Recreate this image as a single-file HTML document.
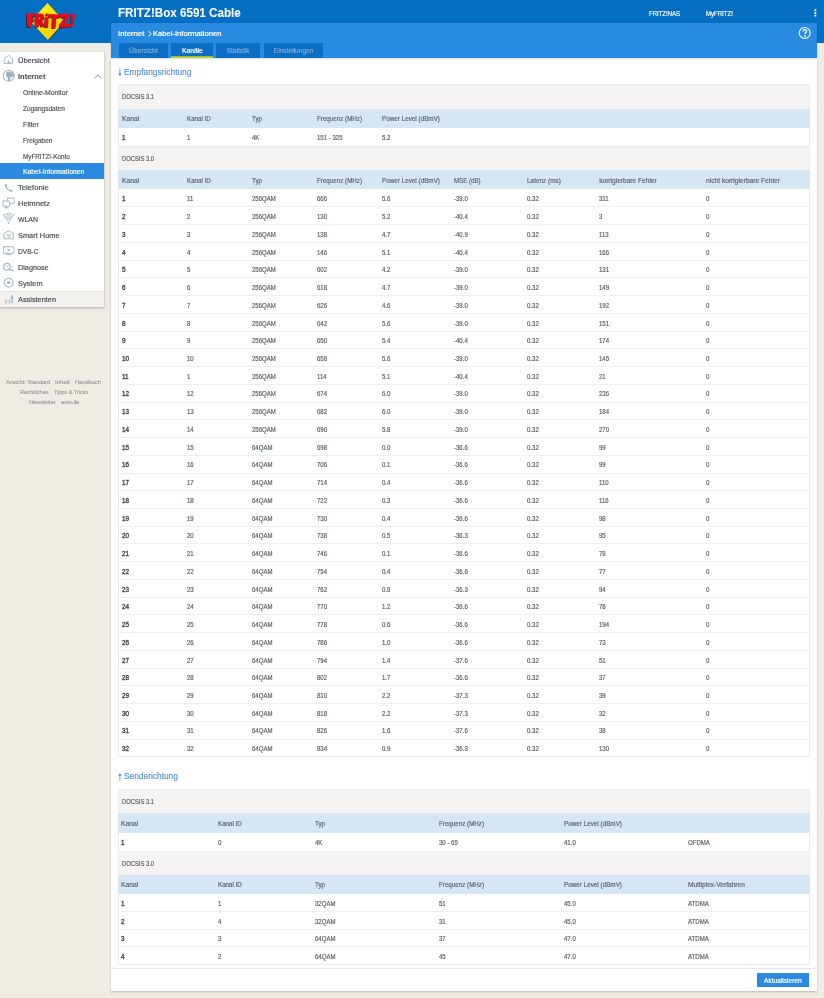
<!DOCTYPE html>
<html><head><meta charset="utf-8"><style>
*{margin:0;padding:0}
html,body{width:824px;height:998px;overflow:hidden;background:#efece6;font-family:"Liberation Sans",sans-serif}
#root{position:absolute;left:0;top:0;width:824px;height:998px;will-change:transform}
.a{position:absolute}
.t{position:absolute;line-height:20px;white-space:nowrap;transform-origin:0 50%;-webkit-text-stroke:0.18px currentColor}
.bd{-webkit-text-stroke:0.05px currentColor}
.sb{-webkit-text-stroke:0.4px currentColor}
</style></head><body><div id="root">
<div class="a" style="left:0.00px;top:0.00px;width:824.00px;height:43.00px;background:#046ec2;"></div>
<div class="a" style="left:111.00px;top:58.20px;width:706.00px;height:932.70px;background:#fff;box-shadow:0 1px 2px rgba(0,0,0,.22)"></div>
<div class="a" style="left:111.00px;top:22.70px;width:706.00px;height:35.50px;background:#288be1;box-shadow:0 1px 1.5px rgba(0,0,0,.15),0 -0.5px 1px rgba(0,40,90,.25)"></div>
<div class="a" style="left:118.80px;top:43.10px;width:49.00px;height:14.80px;background:#0b6dc3;"></div>
<div class="a" style="left:171.00px;top:43.10px;width:41.80px;height:14.80px;background:#0b6dc3;box-shadow:inset 0 -1.8px 0 #c3d21a"></div>
<div class="a" style="left:216.10px;top:43.10px;width:44.00px;height:14.80px;background:#0b6dc3;"></div>
<div class="a" style="left:263.80px;top:43.10px;width:59.70px;height:14.80px;background:#0b6dc3;"></div>
<div class="a" style="left:0.00px;top:52.00px;width:104.00px;height:255.20px;background:#fff;box-shadow:0 1px 2.5px rgba(0,0,0,.25)"></div>
<div class="a" style="left:0.00px;top:291.00px;width:104.00px;height:16.20px;background:#f3f2ef;border-top:0.8px solid #e4e2dd;box-sizing:border-box"></div>
<div class="a" style="left:0.00px;top:163.30px;width:104.00px;height:15.70px;background:#2a8ae0;"></div>
<div class="a" style="left:118.20px;top:84.20px;width:691.80px;height:673.10px;background:#fff;border:0.8px solid #edecea;box-sizing:border-box"></div>
<div class="a" style="left:118.20px;top:84.20px;width:691.80px;height:24.80px;background:#f5f4f2;border:0.8px solid #edecea;border-bottom:none;box-sizing:border-box"></div>
<div class="a" style="left:118.20px;top:109.00px;width:691.80px;height:19.00px;background:#d5e6f5;"></div>
<div class="a" style="left:118.20px;top:145.50px;width:691.80px;height:24.70px;background:#f5f4f2;border:0.8px solid #edecea;border-bottom:none;box-sizing:border-box"></div>
<div class="a" style="left:118.20px;top:170.20px;width:691.80px;height:19.30px;background:#d5e6f5;"></div>
<div class="a" style="left:119.00px;top:206.44px;width:690.20px;height:0.80px;background:#efefef;"></div>
<div class="a" style="left:119.00px;top:224.18px;width:690.20px;height:0.80px;background:#efefef;"></div>
<div class="a" style="left:119.00px;top:241.91px;width:690.20px;height:0.80px;background:#efefef;"></div>
<div class="a" style="left:119.00px;top:259.65px;width:690.20px;height:0.80px;background:#efefef;"></div>
<div class="a" style="left:119.00px;top:277.39px;width:690.20px;height:0.80px;background:#efefef;"></div>
<div class="a" style="left:119.00px;top:295.12px;width:690.20px;height:0.80px;background:#efefef;"></div>
<div class="a" style="left:119.00px;top:312.86px;width:690.20px;height:0.80px;background:#efefef;"></div>
<div class="a" style="left:119.00px;top:330.60px;width:690.20px;height:0.80px;background:#efefef;"></div>
<div class="a" style="left:119.00px;top:348.34px;width:690.20px;height:0.80px;background:#efefef;"></div>
<div class="a" style="left:119.00px;top:366.08px;width:690.20px;height:0.80px;background:#efefef;"></div>
<div class="a" style="left:119.00px;top:383.81px;width:690.20px;height:0.80px;background:#efefef;"></div>
<div class="a" style="left:119.00px;top:401.55px;width:690.20px;height:0.80px;background:#efefef;"></div>
<div class="a" style="left:119.00px;top:419.29px;width:690.20px;height:0.80px;background:#efefef;"></div>
<div class="a" style="left:119.00px;top:437.02px;width:690.20px;height:0.80px;background:#efefef;"></div>
<div class="a" style="left:119.00px;top:454.76px;width:690.20px;height:0.80px;background:#efefef;"></div>
<div class="a" style="left:119.00px;top:472.50px;width:690.20px;height:0.80px;background:#efefef;"></div>
<div class="a" style="left:119.00px;top:490.24px;width:690.20px;height:0.80px;background:#efefef;"></div>
<div class="a" style="left:119.00px;top:507.98px;width:690.20px;height:0.80px;background:#efefef;"></div>
<div class="a" style="left:119.00px;top:525.71px;width:690.20px;height:0.80px;background:#efefef;"></div>
<div class="a" style="left:119.00px;top:543.45px;width:690.20px;height:0.80px;background:#efefef;"></div>
<div class="a" style="left:119.00px;top:561.19px;width:690.20px;height:0.80px;background:#efefef;"></div>
<div class="a" style="left:119.00px;top:578.92px;width:690.20px;height:0.80px;background:#efefef;"></div>
<div class="a" style="left:119.00px;top:596.66px;width:690.20px;height:0.80px;background:#efefef;"></div>
<div class="a" style="left:119.00px;top:614.40px;width:690.20px;height:0.80px;background:#efefef;"></div>
<div class="a" style="left:119.00px;top:632.14px;width:690.20px;height:0.80px;background:#efefef;"></div>
<div class="a" style="left:119.00px;top:649.88px;width:690.20px;height:0.80px;background:#efefef;"></div>
<div class="a" style="left:119.00px;top:667.61px;width:690.20px;height:0.80px;background:#efefef;"></div>
<div class="a" style="left:119.00px;top:685.35px;width:690.20px;height:0.80px;background:#efefef;"></div>
<div class="a" style="left:119.00px;top:703.09px;width:690.20px;height:0.80px;background:#efefef;"></div>
<div class="a" style="left:119.00px;top:720.83px;width:690.20px;height:0.80px;background:#efefef;"></div>
<div class="a" style="left:119.00px;top:738.56px;width:690.20px;height:0.80px;background:#efefef;"></div>
<div class="a" style="left:118.20px;top:788.60px;width:691.80px;height:176.10px;background:#fff;border:0.8px solid #edecea;box-sizing:border-box"></div>
<div class="a" style="left:118.20px;top:788.60px;width:691.80px;height:24.80px;background:#f5f4f2;border:0.8px solid #edecea;border-bottom:none;box-sizing:border-box"></div>
<div class="a" style="left:118.20px;top:813.40px;width:691.80px;height:19.30px;background:#d5e6f5;"></div>
<div class="a" style="left:118.20px;top:850.50px;width:691.80px;height:24.40px;background:#f5f4f2;border:0.8px solid #edecea;border-bottom:none;box-sizing:border-box"></div>
<div class="a" style="left:118.20px;top:874.90px;width:691.80px;height:18.90px;background:#d5e6f5;"></div>
<div class="a" style="left:119.00px;top:910.80px;width:690.20px;height:0.80px;background:#efefef;"></div>
<div class="a" style="left:119.00px;top:928.60px;width:690.20px;height:0.80px;background:#efefef;"></div>
<div class="a" style="left:119.00px;top:946.40px;width:690.20px;height:0.80px;background:#efefef;"></div>
<div class="a" style="left:111.00px;top:968.00px;width:706.00px;height:0.80px;background:#e6e6e6;"></div>
<div class="a" style="left:757.10px;top:973.40px;width:51.60px;height:13.50px;background:#2a8ae0;"></div>
<svg class="a" style="left:0;top:52px" width="20" height="256" viewBox="0 52 20 256" fill="none" stroke="#a3b4c1" stroke-width="0.95" stroke-linejoin="round" stroke-linecap="round">
<path d="M4.6,58.6 L8.6,55.3 L12.6,58.6 L12.6,63.6 L4.6,63.6 Z"/>
<rect x="7.6" y="60.8" width="2" height="2.9" fill="#a3b4c1" stroke="none"/>
<circle cx="8.7" cy="75.8" r="5.5" stroke-width="1.05"/>
<path d="M6.4,72.3 C8.2,70.9 11.6,71.1 13.3,73.2 L14,75.9 C12.8,77 11.4,76.9 10.5,77.2 L9.9,80.9 L8.1,80.9 L7.6,77.3 C6.5,76.9 5.7,75.9 5.8,74.3 Z" fill="#a3b4c1" stroke="none"/>
<path d="M5.3,184.2 C4.6,184.8 4.6,186 5.6,187.6 C7,189.8 9.2,191.6 11.2,192 C12,192.1 12.6,191.6 12.8,191.1 L11.3,189.6 L9.8,190.1 C8.5,189.3 7.4,188 6.7,186.7 L7.3,185.2 L5.9,183.7 Z" fill="#a3b4c1" stroke="none"/>
<rect x="7.4" y="198.2" width="6.8" height="5.2" rx="0.4"/>
<rect x="3" y="201" width="6.8" height="5.2" rx="0.4" fill="#fff"/>
<path d="M6.4,206.3 L6.4,207.6 M4.6,207.8 L8.2,207.8"/>
<path d="M3.03,215.48 A9.3,9.3 0 0 1 13.97,215.48 M4.27,217.18 A7.2,7.2 0 0 1 12.73,217.18 M5.44,218.79 A5.2,5.2 0 0 1 11.56,218.79 M6.56,220.33 A3.3,3.3 0 0 1 10.44,220.33" stroke-width="1.0"/>
<circle cx="8.5" cy="222.7" r="1" fill="#a3b4c1" stroke="none"/>
<path d="M4.3,233.3 L8.8,230.8 L13.3,233.3 L13.3,238.8 L4.3,238.8 Z"/>
<path d="M8.8,237.3 L7.1,235.6 C6.6,235 7.2,234.1 8,234.4 L8.8,235 L9.6,234.4 C10.4,234.1 11,235 10.5,235.6 Z"/>
<rect x="3.6" y="246.8" width="10.4" height="6.6" rx="0.5"/>
<path d="M7.6,248.3 L10.4,250.1 L7.6,251.9 Z" fill="#a3b4c1" stroke="none"/>
<path d="M7,254.6 L10.6,254.6"/>
<circle cx="6.9" cy="266.7" r="3.3" stroke-width="1.15"/>
<path d="M9.4,269.2 L13.4,270.8" stroke-width="1.4"/>
<path d="M5.6,265.6 L7,267 L8.2,266.2" stroke-width="0.8"/>
<circle cx="12.6" cy="266.4" r="0.55" fill="#a3b4c1" stroke="none"/>
<circle cx="8.6" cy="282.6" r="4.4" stroke-width="1.15" stroke-dasharray="2.6 1.0"/>
<circle cx="8.6" cy="282.6" r="1.7" fill="#a3b4c1" stroke="none"/>
<path d="M4.3,299.7 L5.9,299.7 L7.6,301.5 L5.9,303.3 L4.3,303.3 L6,301.5 Z M7.9,299.7 L9.5,299.7 L11.2,301.5 L9.5,303.3 L7.9,303.3 L9.6,301.5 Z" fill="#a3b4c1" stroke="none"/>
<rect x="11.7" y="295.2" width="1.1" height="8.1" fill="#a3b4c1" stroke="none"/>
<path d="M12.8,295.2 L9.8,297.9 L12.8,299.2 Z" fill="#a3b4c1" stroke="none"/>
</svg>
<svg class="a" style="left:93px;top:72.5px" width="10" height="7"><polyline points="1.3,5.2 4.8,2 8.3,5.2" fill="none" stroke="#7f868c" stroke-width="0.9"/></svg>
<svg class="a" style="left:146.5px;top:30px" width="6" height="8"><polyline points="1.2,1.2 4.3,3.8 1.2,6.4" fill="none" stroke="#fff" stroke-width="0.9"/></svg>
<svg class="a" style="left:812.5px;top:8px" width="5" height="10"><rect x="1.4" y="1.3" width="1.9" height="1.8" fill="#fff"/><rect x="1.4" y="4" width="1.9" height="1.8" fill="#fff"/><rect x="1.4" y="6.7" width="1.9" height="1.8" fill="#fff"/></svg>
<svg class="a" style="left:797px;top:26px" width="16" height="14"><circle cx="7.7" cy="7" r="5.5" fill="none" stroke="#fff" stroke-width="1.1"/><path d="M6.1,5.4 C6.1,4.2 6.9,3.6 7.8,3.6 C8.8,3.6 9.5,4.3 9.5,5.2 C9.5,6.4 8,6.5 8,8.1" fill="none" stroke="#fff" stroke-width="1.35"/><circle cx="8" cy="9.9" r="0.85" fill="#fff"/></svg>
<svg class="a" style="left:117px;top:67px" width="6" height="10"><path d="M2.9,1.5 L2.9,8.5" stroke="#5296de" stroke-width="0.9"/><path d="M1.2,6.3 L2.9,9 L4.6,6.3 Z" fill="#5296de"/></svg>
<svg class="a" style="left:117px;top:771.5px" width="6" height="10"><path d="M2.9,1.5 L2.9,8.8" stroke="#5296de" stroke-width="0.9"/><path d="M1.2,4 L2.9,1.2 L4.6,4 Z" fill="#5296de"/></svg>
<svg class="a" style="left:20px;top:0" width="60" height="43" viewBox="0 0 60 43">
<defs><linearGradient id="lg" x1="0" y1="0" x2="1" y2="1"><stop offset="0" stop-color="#fff48a"/><stop offset="0.35" stop-color="#ffe600"/><stop offset="1" stop-color="#f0c800"/></linearGradient></defs>
<polygon points="27.5,3 44.5,21.4 28,40 10.5,21.4" fill="#203060" opacity="0.55" transform="translate(0.9,0.9)"/>
<polygon points="27.5,3 44.5,21.4 28,40 10.5,21.4" fill="url(#lg)"/>
<g transform="translate(-0.7,0.8)" fill="#3a0a10" opacity="0.8">
<path d="M6.5,13.6 L14.4,13.2 L14.6,16.6 L10.8,16.8 L10.9,18.8 L14,18.7 L14.2,21.9 L11.1,22 L11.3,26.9 L7.2,27.1 Z"/>
<path d="M15,13.6 L20.5,13.5 C23.4,13.5 24.6,15.3 24.4,17.6 C24.3,19.3 23.4,20.3 22.3,20.8 L25.2,26.3 L21,26.8 L18.8,21.6 L19,26.9 L15.2,27 Z M18.8,16.4 L18.9,19 C20.1,19 20.6,18.5 20.6,17.6 C20.6,16.8 20.1,16.3 18.8,16.4 Z"/>
<path d="M25.1,17 L28.6,17.2 L28.1,27.4 L24.6,27.2 Z M25.6,13.8 L28.4,13.6 L28.6,15.6 L25.8,15.8 Z"/>
<path d="M28.9,13.9 L39.4,14.6 L39.1,18.1 L36.2,17.9 L35.6,28.3 L31.8,28.1 L32.4,17.7 L28.6,17.4 Z"/>
<path d="M39.6,14 L49.6,13.2 L49.9,16.4 L44.4,23.4 L50.3,23 L50.6,26.8 L39.8,27.6 L39.5,24.5 L45.2,17.3 L39.9,17.7 Z"/>
<path d="M51.5,13.8 L55.2,14.3 L53.6,22.6 L50.8,22.2 Z M50.2,23.6 L53.1,24 L52.7,26.8 L49.8,26.4 Z"/>
</g>
<g fill="#e30d20">
<path d="M6.5,13.6 L14.4,13.2 L14.6,16.6 L10.8,16.8 L10.9,18.8 L14,18.7 L14.2,21.9 L11.1,22 L11.3,26.9 L7.2,27.1 Z"/>
<path d="M15,13.6 L20.5,13.5 C23.4,13.5 24.6,15.3 24.4,17.6 C24.3,19.3 23.4,20.3 22.3,20.8 L25.2,26.3 L21,26.8 L18.8,21.6 L19,26.9 L15.2,27 Z M18.8,16.4 L18.9,19 C20.1,19 20.6,18.5 20.6,17.6 C20.6,16.8 20.1,16.3 18.8,16.4 Z"/>
<path d="M25.1,17 L28.6,17.2 L28.1,27.4 L24.6,27.2 Z M25.6,13.8 L28.4,13.6 L28.6,15.6 L25.8,15.8 Z"/>
<path d="M28.9,13.9 L39.4,14.6 L39.1,18.1 L36.2,17.9 L35.6,28.3 L31.8,28.1 L32.4,17.7 L28.6,17.4 Z"/>
<path d="M39.6,14 L49.6,13.2 L49.9,16.4 L44.4,23.4 L50.3,23 L50.6,26.8 L39.8,27.6 L39.5,24.5 L45.2,17.3 L39.9,17.7 Z"/>
<path d="M51.5,13.8 L55.2,14.3 L53.6,22.6 L50.8,22.2 Z M50.2,23.6 L53.1,24 L52.7,26.8 L49.8,26.4 Z"/>
</g></svg>
<div class="t bd" style="left:117.92px;top:3.30px;font-size:13px;font-weight:700;color:#fff;transform:scaleX(0.8938);">FRITZ!Box 6591 Cable</div>
<div class="t" style="left:649.09px;top:3.60px;font-size:6.8px;font-weight:400;color:#fff;transform:scaleX(0.8832);">FRITZ!NAS</div>
<div class="t" style="left:706.29px;top:3.60px;font-size:6.8px;font-weight:400;color:#fff;transform:scaleX(0.8881);">MyFRITZ!</div>
<div class="t" style="left:118.26px;top:23.80px;font-size:7.4px;font-weight:400;color:#fff;transform:scaleX(1.0507);-webkit-text-stroke:0.22px #fff;">Internet</div>
<div class="t" style="left:152.56px;top:23.80px;font-size:7.4px;font-weight:400;color:#fff;transform:scaleX(1.0278);-webkit-text-stroke:0.22px #fff;">Kabel-Informationen</div>
<div class="t" style="left:128.90px;top:40.50px;font-size:6.6px;font-weight:400;color:#80abdb;transform:scaleX(1.0345);">Übersicht</div>
<div class="t" style="left:181.50px;top:40.50px;font-size:6.6px;font-weight:400;color:#fff;transform:scaleX(1.0124);">Kanäle</div>
<div class="t" style="left:226.55px;top:40.50px;font-size:6.6px;font-weight:400;color:#80abdb;">Statistik</div>
<div class="t" style="left:273.85px;top:40.50px;font-size:6.6px;font-weight:400;color:#80abdb;">Einstellungen</div>
<div class="t" style="left:17.76px;top:51.30px;font-size:7.3px;font-weight:400;color:#464d54;transform:scaleX(1.0316);">Übersicht</div>
<div class="t bd" style="left:17.76px;top:66.80px;font-size:7.3px;font-weight:700;color:#464d54;transform:scaleX(1.0274);">Internet</div>
<div class="t" style="left:17.76px;top:178.10px;font-size:7.3px;font-weight:400;color:#464d54;transform:scaleX(1.0514);">Telefonie</div>
<div class="t" style="left:17.76px;top:194.00px;font-size:7.3px;font-weight:400;color:#464d54;transform:scaleX(1.0383);">Heimnetz</div>
<div class="t" style="left:17.76px;top:209.80px;font-size:7.3px;font-weight:400;color:#464d54;transform:scaleX(0.9447);">WLAN</div>
<div class="t" style="left:17.76px;top:225.80px;font-size:7.3px;font-weight:400;color:#464d54;transform:scaleX(1.0155);">Smart Home</div>
<div class="t" style="left:17.76px;top:241.70px;font-size:7.3px;font-weight:400;color:#464d54;transform:scaleX(0.9071);">DVB-C</div>
<div class="t" style="left:17.76px;top:257.80px;font-size:7.3px;font-weight:400;color:#464d54;transform:scaleX(0.9944);">Diagnose</div>
<div class="t" style="left:17.76px;top:273.70px;font-size:7.3px;font-weight:400;color:#464d54;transform:scaleX(1.0106);">System</div>
<div class="t" style="left:17.76px;top:289.90px;font-size:7.3px;font-weight:400;color:#464d54;transform:scaleX(1.0066);">Assistenten</div>
<div class="t" style="left:23.00px;top:82.80px;font-size:6.7px;font-weight:400;color:#4f565c;transform:scaleX(1.0219);">Online-Monitor</div>
<div class="t" style="left:23.00px;top:98.70px;font-size:6.7px;font-weight:400;color:#4f565c;transform:scaleX(0.9771);">Zugangsdaten</div>
<div class="t" style="left:23.00px;top:114.70px;font-size:6.7px;font-weight:400;color:#4f565c;transform:scaleX(1.0731);">Filter</div>
<div class="t" style="left:23.00px;top:130.60px;font-size:6.7px;font-weight:400;color:#4f565c;transform:scaleX(0.9788);">Freigaben</div>
<div class="t" style="left:23.00px;top:146.50px;font-size:6.7px;font-weight:400;color:#4f565c;transform:scaleX(0.9462);">MyFRITZ!-Konto</div>
<div class="t" style="left:23.00px;top:161.50px;font-size:6.7px;font-weight:400;color:#fff;transform:scaleX(1.0180);">Kabel-Informationen</div>
<div class="t" style="left:6.33px;top:371.90px;font-size:6.2px;font-weight:400;color:#a19e98;transform:scaleX(0.9023);">Ansicht: Standard</div>
<div class="t" style="left:55.43px;top:371.90px;font-size:6.2px;font-weight:400;color:#a19e98;transform:scaleX(0.9655);">Inhalt</div>
<div class="t" style="left:75.43px;top:371.90px;font-size:6.2px;font-weight:400;color:#a19e98;transform:scaleX(0.9208);">Handbuch</div>
<div class="t" style="left:19.63px;top:381.70px;font-size:6.2px;font-weight:400;color:#a19e98;transform:scaleX(0.8899);">Rechtliches</div>
<div class="t" style="left:53.73px;top:381.70px;font-size:6.2px;font-weight:400;color:#a19e98;transform:scaleX(0.8870);">Tipps &amp; Tricks</div>
<div class="t" style="left:28.63px;top:391.70px;font-size:6.2px;font-weight:400;color:#a19e98;transform:scaleX(0.9126);">Newsletter</div>
<div class="t" style="left:60.63px;top:391.70px;font-size:6.2px;font-weight:400;color:#a19e98;transform:scaleX(0.9104);">avm.de</div>
<div class="t" style="left:123.67px;top:61.70px;font-size:8.8px;font-weight:400;color:#5296de;transform:scaleX(0.9506);">Empfangsrichtung</div>
<div class="t" style="left:123.57px;top:766.10px;font-size:8.8px;font-weight:400;color:#5296de;transform:scaleX(0.9501);">Senderichtung</div>
<div class="t" style="left:122.19px;top:87.40px;font-size:6.9px;font-weight:400;color:#5b6167;transform:scaleX(0.8465);">DOCSIS 3.1</div>
<div class="t" style="left:121.60px;top:109.40px;font-size:6.6px;font-weight:400;color:#5d6670;transform:scaleX(1.0197);">Kanal</div>
<div class="t" style="left:186.60px;top:109.40px;font-size:6.6px;font-weight:400;color:#5d6670;transform:scaleX(0.9400);">Kanal ID</div>
<div class="t" style="left:251.70px;top:109.40px;font-size:6.6px;font-weight:400;color:#5d6670;transform:scaleX(0.9400);">Typ</div>
<div class="t" style="left:317.20px;top:109.40px;font-size:6.6px;font-weight:400;color:#5d6670;transform:scaleX(0.9456);">Frequenz (MHz)</div>
<div class="t" style="left:382.40px;top:109.40px;font-size:6.6px;font-weight:400;color:#5d6670;transform:scaleX(0.9585);">Power Level (dBmV)</div>
<div class="t sb" style="left:121.61px;top:127.75px;font-size:6.5px;font-weight:400;color:#4a5157;transform:scaleX(0.9700);">1</div>
<div class="t" style="left:186.61px;top:127.75px;font-size:6.5px;font-weight:400;color:#5a6066;transform:scaleX(0.9300);">1</div>
<div class="t" style="left:251.71px;top:127.75px;font-size:6.5px;font-weight:400;color:#5a6066;transform:scaleX(0.9300);">4K</div>
<div class="t" style="left:317.21px;top:127.75px;font-size:6.5px;font-weight:400;color:#5a6066;transform:scaleX(0.9300);">151 - 325</div>
<div class="t" style="left:382.41px;top:127.75px;font-size:6.5px;font-weight:400;color:#5a6066;transform:scaleX(0.9300);">5.2</div>
<div class="t" style="left:122.19px;top:148.65px;font-size:6.9px;font-weight:400;color:#5b6167;transform:scaleX(0.8465);">DOCSIS 3.0</div>
<div class="t" style="left:121.60px;top:170.75px;font-size:6.6px;font-weight:400;color:#5d6670;transform:scaleX(1.0197);">Kanal</div>
<div class="t" style="left:186.60px;top:170.75px;font-size:6.6px;font-weight:400;color:#5d6670;transform:scaleX(0.9400);">Kanal ID</div>
<div class="t" style="left:251.70px;top:170.75px;font-size:6.6px;font-weight:400;color:#5d6670;transform:scaleX(0.9400);">Typ</div>
<div class="t" style="left:317.20px;top:170.75px;font-size:6.6px;font-weight:400;color:#5d6670;transform:scaleX(0.9456);">Frequenz (MHz)</div>
<div class="t" style="left:382.40px;top:170.75px;font-size:6.6px;font-weight:400;color:#5d6670;transform:scaleX(0.9585);">Power Level (dBmV)</div>
<div class="t" style="left:454.40px;top:170.75px;font-size:6.6px;font-weight:400;color:#5d6670;transform:scaleX(0.9285);">MSE (dB)</div>
<div class="t" style="left:526.70px;top:170.75px;font-size:6.6px;font-weight:400;color:#5d6670;transform:scaleX(0.9729);">Latenz (ms)</div>
<div class="t" style="left:599.20px;top:170.75px;font-size:6.6px;font-weight:400;color:#5d6670;">korrigierbare Fehler</div>
<div class="t" style="left:705.60px;top:170.75px;font-size:6.6px;font-weight:400;color:#5d6670;transform:scaleX(1.0082);">nicht korrigierbare Fehler</div>
<div class="t sb" style="left:121.61px;top:189.37px;font-size:6.5px;font-weight:400;color:#4a5157;transform:scaleX(0.9700);">1</div>
<div class="t" style="left:186.61px;top:189.37px;font-size:6.5px;font-weight:400;color:#5a6066;transform:scaleX(0.9300);">11</div>
<div class="t" style="left:251.71px;top:189.37px;font-size:6.5px;font-weight:400;color:#5a6066;transform:scaleX(0.9300);">256QAM</div>
<div class="t" style="left:317.21px;top:189.37px;font-size:6.5px;font-weight:400;color:#5a6066;transform:scaleX(0.9300);">666</div>
<div class="t" style="left:382.41px;top:189.37px;font-size:6.5px;font-weight:400;color:#5a6066;transform:scaleX(0.9300);">5.6</div>
<div class="t" style="left:454.41px;top:189.37px;font-size:6.5px;font-weight:400;color:#5a6066;transform:scaleX(0.9300);">-39.0</div>
<div class="t" style="left:526.71px;top:189.37px;font-size:6.5px;font-weight:400;color:#5a6066;transform:scaleX(0.9300);">0.32</div>
<div class="t" style="left:599.21px;top:189.37px;font-size:6.5px;font-weight:400;color:#5a6066;transform:scaleX(0.9300);">311</div>
<div class="t" style="left:705.61px;top:189.37px;font-size:6.5px;font-weight:400;color:#5a6066;transform:scaleX(0.9300);">0</div>
<div class="t sb" style="left:121.61px;top:207.11px;font-size:6.5px;font-weight:400;color:#4a5157;transform:scaleX(0.9700);">2</div>
<div class="t" style="left:186.61px;top:207.11px;font-size:6.5px;font-weight:400;color:#5a6066;transform:scaleX(0.9300);">2</div>
<div class="t" style="left:251.71px;top:207.11px;font-size:6.5px;font-weight:400;color:#5a6066;transform:scaleX(0.9300);">256QAM</div>
<div class="t" style="left:317.21px;top:207.11px;font-size:6.5px;font-weight:400;color:#5a6066;transform:scaleX(0.9300);">130</div>
<div class="t" style="left:382.41px;top:207.11px;font-size:6.5px;font-weight:400;color:#5a6066;transform:scaleX(0.9300);">5.2</div>
<div class="t" style="left:454.41px;top:207.11px;font-size:6.5px;font-weight:400;color:#5a6066;transform:scaleX(0.9300);">-40.4</div>
<div class="t" style="left:526.71px;top:207.11px;font-size:6.5px;font-weight:400;color:#5a6066;transform:scaleX(0.9300);">0.32</div>
<div class="t" style="left:599.21px;top:207.11px;font-size:6.5px;font-weight:400;color:#5a6066;transform:scaleX(0.9300);">3</div>
<div class="t" style="left:705.61px;top:207.11px;font-size:6.5px;font-weight:400;color:#5a6066;transform:scaleX(0.9300);">0</div>
<div class="t sb" style="left:121.61px;top:224.84px;font-size:6.5px;font-weight:400;color:#4a5157;transform:scaleX(0.9700);">3</div>
<div class="t" style="left:186.61px;top:224.84px;font-size:6.5px;font-weight:400;color:#5a6066;transform:scaleX(0.9300);">3</div>
<div class="t" style="left:251.71px;top:224.84px;font-size:6.5px;font-weight:400;color:#5a6066;transform:scaleX(0.9300);">256QAM</div>
<div class="t" style="left:317.21px;top:224.84px;font-size:6.5px;font-weight:400;color:#5a6066;transform:scaleX(0.9300);">138</div>
<div class="t" style="left:382.41px;top:224.84px;font-size:6.5px;font-weight:400;color:#5a6066;transform:scaleX(0.9300);">4.7</div>
<div class="t" style="left:454.41px;top:224.84px;font-size:6.5px;font-weight:400;color:#5a6066;transform:scaleX(0.9300);">-40.9</div>
<div class="t" style="left:526.71px;top:224.84px;font-size:6.5px;font-weight:400;color:#5a6066;transform:scaleX(0.9300);">0.32</div>
<div class="t" style="left:599.21px;top:224.84px;font-size:6.5px;font-weight:400;color:#5a6066;transform:scaleX(0.9300);">113</div>
<div class="t" style="left:705.61px;top:224.84px;font-size:6.5px;font-weight:400;color:#5a6066;transform:scaleX(0.9300);">0</div>
<div class="t sb" style="left:121.61px;top:242.58px;font-size:6.5px;font-weight:400;color:#4a5157;transform:scaleX(0.9700);">4</div>
<div class="t" style="left:186.61px;top:242.58px;font-size:6.5px;font-weight:400;color:#5a6066;transform:scaleX(0.9300);">4</div>
<div class="t" style="left:251.71px;top:242.58px;font-size:6.5px;font-weight:400;color:#5a6066;transform:scaleX(0.9300);">256QAM</div>
<div class="t" style="left:317.21px;top:242.58px;font-size:6.5px;font-weight:400;color:#5a6066;transform:scaleX(0.9300);">146</div>
<div class="t" style="left:382.41px;top:242.58px;font-size:6.5px;font-weight:400;color:#5a6066;transform:scaleX(0.9300);">5.1</div>
<div class="t" style="left:454.41px;top:242.58px;font-size:6.5px;font-weight:400;color:#5a6066;transform:scaleX(0.9300);">-40.4</div>
<div class="t" style="left:526.71px;top:242.58px;font-size:6.5px;font-weight:400;color:#5a6066;transform:scaleX(0.9300);">0.32</div>
<div class="t" style="left:599.21px;top:242.58px;font-size:6.5px;font-weight:400;color:#5a6066;transform:scaleX(0.9300);">166</div>
<div class="t" style="left:705.61px;top:242.58px;font-size:6.5px;font-weight:400;color:#5a6066;transform:scaleX(0.9300);">0</div>
<div class="t sb" style="left:121.61px;top:260.32px;font-size:6.5px;font-weight:400;color:#4a5157;transform:scaleX(0.9700);">5</div>
<div class="t" style="left:186.61px;top:260.32px;font-size:6.5px;font-weight:400;color:#5a6066;transform:scaleX(0.9300);">5</div>
<div class="t" style="left:251.71px;top:260.32px;font-size:6.5px;font-weight:400;color:#5a6066;transform:scaleX(0.9300);">256QAM</div>
<div class="t" style="left:317.21px;top:260.32px;font-size:6.5px;font-weight:400;color:#5a6066;transform:scaleX(0.9300);">602</div>
<div class="t" style="left:382.41px;top:260.32px;font-size:6.5px;font-weight:400;color:#5a6066;transform:scaleX(0.9300);">4.2</div>
<div class="t" style="left:454.41px;top:260.32px;font-size:6.5px;font-weight:400;color:#5a6066;transform:scaleX(0.9300);">-39.0</div>
<div class="t" style="left:526.71px;top:260.32px;font-size:6.5px;font-weight:400;color:#5a6066;transform:scaleX(0.9300);">0.32</div>
<div class="t" style="left:599.21px;top:260.32px;font-size:6.5px;font-weight:400;color:#5a6066;transform:scaleX(0.9300);">131</div>
<div class="t" style="left:705.61px;top:260.32px;font-size:6.5px;font-weight:400;color:#5a6066;transform:scaleX(0.9300);">0</div>
<div class="t sb" style="left:121.61px;top:278.06px;font-size:6.5px;font-weight:400;color:#4a5157;transform:scaleX(0.9700);">6</div>
<div class="t" style="left:186.61px;top:278.06px;font-size:6.5px;font-weight:400;color:#5a6066;transform:scaleX(0.9300);">6</div>
<div class="t" style="left:251.71px;top:278.06px;font-size:6.5px;font-weight:400;color:#5a6066;transform:scaleX(0.9300);">256QAM</div>
<div class="t" style="left:317.21px;top:278.06px;font-size:6.5px;font-weight:400;color:#5a6066;transform:scaleX(0.9300);">618</div>
<div class="t" style="left:382.41px;top:278.06px;font-size:6.5px;font-weight:400;color:#5a6066;transform:scaleX(0.9300);">4.7</div>
<div class="t" style="left:454.41px;top:278.06px;font-size:6.5px;font-weight:400;color:#5a6066;transform:scaleX(0.9300);">-39.0</div>
<div class="t" style="left:526.71px;top:278.06px;font-size:6.5px;font-weight:400;color:#5a6066;transform:scaleX(0.9300);">0.32</div>
<div class="t" style="left:599.21px;top:278.06px;font-size:6.5px;font-weight:400;color:#5a6066;transform:scaleX(0.9300);">149</div>
<div class="t" style="left:705.61px;top:278.06px;font-size:6.5px;font-weight:400;color:#5a6066;transform:scaleX(0.9300);">0</div>
<div class="t sb" style="left:121.61px;top:295.79px;font-size:6.5px;font-weight:400;color:#4a5157;transform:scaleX(0.9700);">7</div>
<div class="t" style="left:186.61px;top:295.79px;font-size:6.5px;font-weight:400;color:#5a6066;transform:scaleX(0.9300);">7</div>
<div class="t" style="left:251.71px;top:295.79px;font-size:6.5px;font-weight:400;color:#5a6066;transform:scaleX(0.9300);">256QAM</div>
<div class="t" style="left:317.21px;top:295.79px;font-size:6.5px;font-weight:400;color:#5a6066;transform:scaleX(0.9300);">626</div>
<div class="t" style="left:382.41px;top:295.79px;font-size:6.5px;font-weight:400;color:#5a6066;transform:scaleX(0.9300);">4.6</div>
<div class="t" style="left:454.41px;top:295.79px;font-size:6.5px;font-weight:400;color:#5a6066;transform:scaleX(0.9300);">-39.0</div>
<div class="t" style="left:526.71px;top:295.79px;font-size:6.5px;font-weight:400;color:#5a6066;transform:scaleX(0.9300);">0.32</div>
<div class="t" style="left:599.21px;top:295.79px;font-size:6.5px;font-weight:400;color:#5a6066;transform:scaleX(0.9300);">192</div>
<div class="t" style="left:705.61px;top:295.79px;font-size:6.5px;font-weight:400;color:#5a6066;transform:scaleX(0.9300);">0</div>
<div class="t sb" style="left:121.61px;top:313.53px;font-size:6.5px;font-weight:400;color:#4a5157;transform:scaleX(0.9700);">8</div>
<div class="t" style="left:186.61px;top:313.53px;font-size:6.5px;font-weight:400;color:#5a6066;transform:scaleX(0.9300);">8</div>
<div class="t" style="left:251.71px;top:313.53px;font-size:6.5px;font-weight:400;color:#5a6066;transform:scaleX(0.9300);">256QAM</div>
<div class="t" style="left:317.21px;top:313.53px;font-size:6.5px;font-weight:400;color:#5a6066;transform:scaleX(0.9300);">642</div>
<div class="t" style="left:382.41px;top:313.53px;font-size:6.5px;font-weight:400;color:#5a6066;transform:scaleX(0.9300);">5.6</div>
<div class="t" style="left:454.41px;top:313.53px;font-size:6.5px;font-weight:400;color:#5a6066;transform:scaleX(0.9300);">-39.0</div>
<div class="t" style="left:526.71px;top:313.53px;font-size:6.5px;font-weight:400;color:#5a6066;transform:scaleX(0.9300);">0.32</div>
<div class="t" style="left:599.21px;top:313.53px;font-size:6.5px;font-weight:400;color:#5a6066;transform:scaleX(0.9300);">151</div>
<div class="t" style="left:705.61px;top:313.53px;font-size:6.5px;font-weight:400;color:#5a6066;transform:scaleX(0.9300);">0</div>
<div class="t sb" style="left:121.61px;top:331.27px;font-size:6.5px;font-weight:400;color:#4a5157;transform:scaleX(0.9700);">9</div>
<div class="t" style="left:186.61px;top:331.27px;font-size:6.5px;font-weight:400;color:#5a6066;transform:scaleX(0.9300);">9</div>
<div class="t" style="left:251.71px;top:331.27px;font-size:6.5px;font-weight:400;color:#5a6066;transform:scaleX(0.9300);">256QAM</div>
<div class="t" style="left:317.21px;top:331.27px;font-size:6.5px;font-weight:400;color:#5a6066;transform:scaleX(0.9300);">650</div>
<div class="t" style="left:382.41px;top:331.27px;font-size:6.5px;font-weight:400;color:#5a6066;transform:scaleX(0.9300);">5.4</div>
<div class="t" style="left:454.41px;top:331.27px;font-size:6.5px;font-weight:400;color:#5a6066;transform:scaleX(0.9300);">-40.4</div>
<div class="t" style="left:526.71px;top:331.27px;font-size:6.5px;font-weight:400;color:#5a6066;transform:scaleX(0.9300);">0.32</div>
<div class="t" style="left:599.21px;top:331.27px;font-size:6.5px;font-weight:400;color:#5a6066;transform:scaleX(0.9300);">174</div>
<div class="t" style="left:705.61px;top:331.27px;font-size:6.5px;font-weight:400;color:#5a6066;transform:scaleX(0.9300);">0</div>
<div class="t sb" style="left:121.61px;top:349.01px;font-size:6.5px;font-weight:400;color:#4a5157;transform:scaleX(0.9700);">10</div>
<div class="t" style="left:186.61px;top:349.01px;font-size:6.5px;font-weight:400;color:#5a6066;transform:scaleX(0.9300);">10</div>
<div class="t" style="left:251.71px;top:349.01px;font-size:6.5px;font-weight:400;color:#5a6066;transform:scaleX(0.9300);">256QAM</div>
<div class="t" style="left:317.21px;top:349.01px;font-size:6.5px;font-weight:400;color:#5a6066;transform:scaleX(0.9300);">658</div>
<div class="t" style="left:382.41px;top:349.01px;font-size:6.5px;font-weight:400;color:#5a6066;transform:scaleX(0.9300);">5.6</div>
<div class="t" style="left:454.41px;top:349.01px;font-size:6.5px;font-weight:400;color:#5a6066;transform:scaleX(0.9300);">-39.0</div>
<div class="t" style="left:526.71px;top:349.01px;font-size:6.5px;font-weight:400;color:#5a6066;transform:scaleX(0.9300);">0.32</div>
<div class="t" style="left:599.21px;top:349.01px;font-size:6.5px;font-weight:400;color:#5a6066;transform:scaleX(0.9300);">145</div>
<div class="t" style="left:705.61px;top:349.01px;font-size:6.5px;font-weight:400;color:#5a6066;transform:scaleX(0.9300);">0</div>
<div class="t sb" style="left:121.61px;top:366.74px;font-size:6.5px;font-weight:400;color:#4a5157;transform:scaleX(0.9700);">11</div>
<div class="t" style="left:186.61px;top:366.74px;font-size:6.5px;font-weight:400;color:#5a6066;transform:scaleX(0.9300);">1</div>
<div class="t" style="left:251.71px;top:366.74px;font-size:6.5px;font-weight:400;color:#5a6066;transform:scaleX(0.9300);">256QAM</div>
<div class="t" style="left:317.21px;top:366.74px;font-size:6.5px;font-weight:400;color:#5a6066;transform:scaleX(0.9300);">114</div>
<div class="t" style="left:382.41px;top:366.74px;font-size:6.5px;font-weight:400;color:#5a6066;transform:scaleX(0.9300);">5.1</div>
<div class="t" style="left:454.41px;top:366.74px;font-size:6.5px;font-weight:400;color:#5a6066;transform:scaleX(0.9300);">-40.4</div>
<div class="t" style="left:526.71px;top:366.74px;font-size:6.5px;font-weight:400;color:#5a6066;transform:scaleX(0.9300);">0.32</div>
<div class="t" style="left:599.21px;top:366.74px;font-size:6.5px;font-weight:400;color:#5a6066;transform:scaleX(0.9300);">21</div>
<div class="t" style="left:705.61px;top:366.74px;font-size:6.5px;font-weight:400;color:#5a6066;transform:scaleX(0.9300);">0</div>
<div class="t sb" style="left:121.61px;top:384.48px;font-size:6.5px;font-weight:400;color:#4a5157;transform:scaleX(0.9700);">12</div>
<div class="t" style="left:186.61px;top:384.48px;font-size:6.5px;font-weight:400;color:#5a6066;transform:scaleX(0.9300);">12</div>
<div class="t" style="left:251.71px;top:384.48px;font-size:6.5px;font-weight:400;color:#5a6066;transform:scaleX(0.9300);">256QAM</div>
<div class="t" style="left:317.21px;top:384.48px;font-size:6.5px;font-weight:400;color:#5a6066;transform:scaleX(0.9300);">674</div>
<div class="t" style="left:382.41px;top:384.48px;font-size:6.5px;font-weight:400;color:#5a6066;transform:scaleX(0.9300);">6.0</div>
<div class="t" style="left:454.41px;top:384.48px;font-size:6.5px;font-weight:400;color:#5a6066;transform:scaleX(0.9300);">-39.0</div>
<div class="t" style="left:526.71px;top:384.48px;font-size:6.5px;font-weight:400;color:#5a6066;transform:scaleX(0.9300);">0.32</div>
<div class="t" style="left:599.21px;top:384.48px;font-size:6.5px;font-weight:400;color:#5a6066;transform:scaleX(0.9300);">236</div>
<div class="t" style="left:705.61px;top:384.48px;font-size:6.5px;font-weight:400;color:#5a6066;transform:scaleX(0.9300);">0</div>
<div class="t sb" style="left:121.61px;top:402.22px;font-size:6.5px;font-weight:400;color:#4a5157;transform:scaleX(0.9700);">13</div>
<div class="t" style="left:186.61px;top:402.22px;font-size:6.5px;font-weight:400;color:#5a6066;transform:scaleX(0.9300);">13</div>
<div class="t" style="left:251.71px;top:402.22px;font-size:6.5px;font-weight:400;color:#5a6066;transform:scaleX(0.9300);">256QAM</div>
<div class="t" style="left:317.21px;top:402.22px;font-size:6.5px;font-weight:400;color:#5a6066;transform:scaleX(0.9300);">682</div>
<div class="t" style="left:382.41px;top:402.22px;font-size:6.5px;font-weight:400;color:#5a6066;transform:scaleX(0.9300);">6.0</div>
<div class="t" style="left:454.41px;top:402.22px;font-size:6.5px;font-weight:400;color:#5a6066;transform:scaleX(0.9300);">-39.0</div>
<div class="t" style="left:526.71px;top:402.22px;font-size:6.5px;font-weight:400;color:#5a6066;transform:scaleX(0.9300);">0.32</div>
<div class="t" style="left:599.21px;top:402.22px;font-size:6.5px;font-weight:400;color:#5a6066;transform:scaleX(0.9300);">184</div>
<div class="t" style="left:705.61px;top:402.22px;font-size:6.5px;font-weight:400;color:#5a6066;transform:scaleX(0.9300);">0</div>
<div class="t sb" style="left:121.61px;top:419.96px;font-size:6.5px;font-weight:400;color:#4a5157;transform:scaleX(0.9700);">14</div>
<div class="t" style="left:186.61px;top:419.96px;font-size:6.5px;font-weight:400;color:#5a6066;transform:scaleX(0.9300);">14</div>
<div class="t" style="left:251.71px;top:419.96px;font-size:6.5px;font-weight:400;color:#5a6066;transform:scaleX(0.9300);">256QAM</div>
<div class="t" style="left:317.21px;top:419.96px;font-size:6.5px;font-weight:400;color:#5a6066;transform:scaleX(0.9300);">690</div>
<div class="t" style="left:382.41px;top:419.96px;font-size:6.5px;font-weight:400;color:#5a6066;transform:scaleX(0.9300);">5.8</div>
<div class="t" style="left:454.41px;top:419.96px;font-size:6.5px;font-weight:400;color:#5a6066;transform:scaleX(0.9300);">-39.0</div>
<div class="t" style="left:526.71px;top:419.96px;font-size:6.5px;font-weight:400;color:#5a6066;transform:scaleX(0.9300);">0.32</div>
<div class="t" style="left:599.21px;top:419.96px;font-size:6.5px;font-weight:400;color:#5a6066;transform:scaleX(0.9300);">270</div>
<div class="t" style="left:705.61px;top:419.96px;font-size:6.5px;font-weight:400;color:#5a6066;transform:scaleX(0.9300);">0</div>
<div class="t sb" style="left:121.61px;top:437.69px;font-size:6.5px;font-weight:400;color:#4a5157;transform:scaleX(0.9700);">15</div>
<div class="t" style="left:186.61px;top:437.69px;font-size:6.5px;font-weight:400;color:#5a6066;transform:scaleX(0.9300);">15</div>
<div class="t" style="left:251.71px;top:437.69px;font-size:6.5px;font-weight:400;color:#5a6066;transform:scaleX(0.9300);">64QAM</div>
<div class="t" style="left:317.21px;top:437.69px;font-size:6.5px;font-weight:400;color:#5a6066;transform:scaleX(0.9300);">698</div>
<div class="t" style="left:382.41px;top:437.69px;font-size:6.5px;font-weight:400;color:#5a6066;transform:scaleX(0.9300);">0.0</div>
<div class="t" style="left:454.41px;top:437.69px;font-size:6.5px;font-weight:400;color:#5a6066;transform:scaleX(0.9300);">-36.6</div>
<div class="t" style="left:526.71px;top:437.69px;font-size:6.5px;font-weight:400;color:#5a6066;transform:scaleX(0.9300);">0.32</div>
<div class="t" style="left:599.21px;top:437.69px;font-size:6.5px;font-weight:400;color:#5a6066;transform:scaleX(0.9300);">99</div>
<div class="t" style="left:705.61px;top:437.69px;font-size:6.5px;font-weight:400;color:#5a6066;transform:scaleX(0.9300);">0</div>
<div class="t sb" style="left:121.61px;top:455.43px;font-size:6.5px;font-weight:400;color:#4a5157;transform:scaleX(0.9700);">16</div>
<div class="t" style="left:186.61px;top:455.43px;font-size:6.5px;font-weight:400;color:#5a6066;transform:scaleX(0.9300);">16</div>
<div class="t" style="left:251.71px;top:455.43px;font-size:6.5px;font-weight:400;color:#5a6066;transform:scaleX(0.9300);">64QAM</div>
<div class="t" style="left:317.21px;top:455.43px;font-size:6.5px;font-weight:400;color:#5a6066;transform:scaleX(0.9300);">706</div>
<div class="t" style="left:382.41px;top:455.43px;font-size:6.5px;font-weight:400;color:#5a6066;transform:scaleX(0.9300);">0.1</div>
<div class="t" style="left:454.41px;top:455.43px;font-size:6.5px;font-weight:400;color:#5a6066;transform:scaleX(0.9300);">-36.6</div>
<div class="t" style="left:526.71px;top:455.43px;font-size:6.5px;font-weight:400;color:#5a6066;transform:scaleX(0.9300);">0.32</div>
<div class="t" style="left:599.21px;top:455.43px;font-size:6.5px;font-weight:400;color:#5a6066;transform:scaleX(0.9300);">99</div>
<div class="t" style="left:705.61px;top:455.43px;font-size:6.5px;font-weight:400;color:#5a6066;transform:scaleX(0.9300);">0</div>
<div class="t sb" style="left:121.61px;top:473.17px;font-size:6.5px;font-weight:400;color:#4a5157;transform:scaleX(0.9700);">17</div>
<div class="t" style="left:186.61px;top:473.17px;font-size:6.5px;font-weight:400;color:#5a6066;transform:scaleX(0.9300);">17</div>
<div class="t" style="left:251.71px;top:473.17px;font-size:6.5px;font-weight:400;color:#5a6066;transform:scaleX(0.9300);">64QAM</div>
<div class="t" style="left:317.21px;top:473.17px;font-size:6.5px;font-weight:400;color:#5a6066;transform:scaleX(0.9300);">714</div>
<div class="t" style="left:382.41px;top:473.17px;font-size:6.5px;font-weight:400;color:#5a6066;transform:scaleX(0.9300);">0.4</div>
<div class="t" style="left:454.41px;top:473.17px;font-size:6.5px;font-weight:400;color:#5a6066;transform:scaleX(0.9300);">-36.6</div>
<div class="t" style="left:526.71px;top:473.17px;font-size:6.5px;font-weight:400;color:#5a6066;transform:scaleX(0.9300);">0.32</div>
<div class="t" style="left:599.21px;top:473.17px;font-size:6.5px;font-weight:400;color:#5a6066;transform:scaleX(0.9300);">110</div>
<div class="t" style="left:705.61px;top:473.17px;font-size:6.5px;font-weight:400;color:#5a6066;transform:scaleX(0.9300);">0</div>
<div class="t sb" style="left:121.61px;top:490.91px;font-size:6.5px;font-weight:400;color:#4a5157;transform:scaleX(0.9700);">18</div>
<div class="t" style="left:186.61px;top:490.91px;font-size:6.5px;font-weight:400;color:#5a6066;transform:scaleX(0.9300);">18</div>
<div class="t" style="left:251.71px;top:490.91px;font-size:6.5px;font-weight:400;color:#5a6066;transform:scaleX(0.9300);">64QAM</div>
<div class="t" style="left:317.21px;top:490.91px;font-size:6.5px;font-weight:400;color:#5a6066;transform:scaleX(0.9300);">722</div>
<div class="t" style="left:382.41px;top:490.91px;font-size:6.5px;font-weight:400;color:#5a6066;transform:scaleX(0.9300);">0.3</div>
<div class="t" style="left:454.41px;top:490.91px;font-size:6.5px;font-weight:400;color:#5a6066;transform:scaleX(0.9300);">-36.6</div>
<div class="t" style="left:526.71px;top:490.91px;font-size:6.5px;font-weight:400;color:#5a6066;transform:scaleX(0.9300);">0.32</div>
<div class="t" style="left:599.21px;top:490.91px;font-size:6.5px;font-weight:400;color:#5a6066;transform:scaleX(0.9300);">116</div>
<div class="t" style="left:705.61px;top:490.91px;font-size:6.5px;font-weight:400;color:#5a6066;transform:scaleX(0.9300);">0</div>
<div class="t sb" style="left:121.61px;top:508.64px;font-size:6.5px;font-weight:400;color:#4a5157;transform:scaleX(0.9700);">19</div>
<div class="t" style="left:186.61px;top:508.64px;font-size:6.5px;font-weight:400;color:#5a6066;transform:scaleX(0.9300);">19</div>
<div class="t" style="left:251.71px;top:508.64px;font-size:6.5px;font-weight:400;color:#5a6066;transform:scaleX(0.9300);">64QAM</div>
<div class="t" style="left:317.21px;top:508.64px;font-size:6.5px;font-weight:400;color:#5a6066;transform:scaleX(0.9300);">730</div>
<div class="t" style="left:382.41px;top:508.64px;font-size:6.5px;font-weight:400;color:#5a6066;transform:scaleX(0.9300);">0.4</div>
<div class="t" style="left:454.41px;top:508.64px;font-size:6.5px;font-weight:400;color:#5a6066;transform:scaleX(0.9300);">-36.6</div>
<div class="t" style="left:526.71px;top:508.64px;font-size:6.5px;font-weight:400;color:#5a6066;transform:scaleX(0.9300);">0.32</div>
<div class="t" style="left:599.21px;top:508.64px;font-size:6.5px;font-weight:400;color:#5a6066;transform:scaleX(0.9300);">98</div>
<div class="t" style="left:705.61px;top:508.64px;font-size:6.5px;font-weight:400;color:#5a6066;transform:scaleX(0.9300);">0</div>
<div class="t sb" style="left:121.61px;top:526.38px;font-size:6.5px;font-weight:400;color:#4a5157;transform:scaleX(0.9700);">20</div>
<div class="t" style="left:186.61px;top:526.38px;font-size:6.5px;font-weight:400;color:#5a6066;transform:scaleX(0.9300);">20</div>
<div class="t" style="left:251.71px;top:526.38px;font-size:6.5px;font-weight:400;color:#5a6066;transform:scaleX(0.9300);">64QAM</div>
<div class="t" style="left:317.21px;top:526.38px;font-size:6.5px;font-weight:400;color:#5a6066;transform:scaleX(0.9300);">738</div>
<div class="t" style="left:382.41px;top:526.38px;font-size:6.5px;font-weight:400;color:#5a6066;transform:scaleX(0.9300);">0.5</div>
<div class="t" style="left:454.41px;top:526.38px;font-size:6.5px;font-weight:400;color:#5a6066;transform:scaleX(0.9300);">-36.3</div>
<div class="t" style="left:526.71px;top:526.38px;font-size:6.5px;font-weight:400;color:#5a6066;transform:scaleX(0.9300);">0.32</div>
<div class="t" style="left:599.21px;top:526.38px;font-size:6.5px;font-weight:400;color:#5a6066;transform:scaleX(0.9300);">95</div>
<div class="t" style="left:705.61px;top:526.38px;font-size:6.5px;font-weight:400;color:#5a6066;transform:scaleX(0.9300);">0</div>
<div class="t sb" style="left:121.61px;top:544.12px;font-size:6.5px;font-weight:400;color:#4a5157;transform:scaleX(0.9700);">21</div>
<div class="t" style="left:186.61px;top:544.12px;font-size:6.5px;font-weight:400;color:#5a6066;transform:scaleX(0.9300);">21</div>
<div class="t" style="left:251.71px;top:544.12px;font-size:6.5px;font-weight:400;color:#5a6066;transform:scaleX(0.9300);">64QAM</div>
<div class="t" style="left:317.21px;top:544.12px;font-size:6.5px;font-weight:400;color:#5a6066;transform:scaleX(0.9300);">746</div>
<div class="t" style="left:382.41px;top:544.12px;font-size:6.5px;font-weight:400;color:#5a6066;transform:scaleX(0.9300);">0.1</div>
<div class="t" style="left:454.41px;top:544.12px;font-size:6.5px;font-weight:400;color:#5a6066;transform:scaleX(0.9300);">-36.6</div>
<div class="t" style="left:526.71px;top:544.12px;font-size:6.5px;font-weight:400;color:#5a6066;transform:scaleX(0.9300);">0.32</div>
<div class="t" style="left:599.21px;top:544.12px;font-size:6.5px;font-weight:400;color:#5a6066;transform:scaleX(0.9300);">78</div>
<div class="t" style="left:705.61px;top:544.12px;font-size:6.5px;font-weight:400;color:#5a6066;transform:scaleX(0.9300);">0</div>
<div class="t sb" style="left:121.61px;top:561.86px;font-size:6.5px;font-weight:400;color:#4a5157;transform:scaleX(0.9700);">22</div>
<div class="t" style="left:186.61px;top:561.86px;font-size:6.5px;font-weight:400;color:#5a6066;transform:scaleX(0.9300);">22</div>
<div class="t" style="left:251.71px;top:561.86px;font-size:6.5px;font-weight:400;color:#5a6066;transform:scaleX(0.9300);">64QAM</div>
<div class="t" style="left:317.21px;top:561.86px;font-size:6.5px;font-weight:400;color:#5a6066;transform:scaleX(0.9300);">754</div>
<div class="t" style="left:382.41px;top:561.86px;font-size:6.5px;font-weight:400;color:#5a6066;transform:scaleX(0.9300);">0.4</div>
<div class="t" style="left:454.41px;top:561.86px;font-size:6.5px;font-weight:400;color:#5a6066;transform:scaleX(0.9300);">-36.6</div>
<div class="t" style="left:526.71px;top:561.86px;font-size:6.5px;font-weight:400;color:#5a6066;transform:scaleX(0.9300);">0.32</div>
<div class="t" style="left:599.21px;top:561.86px;font-size:6.5px;font-weight:400;color:#5a6066;transform:scaleX(0.9300);">77</div>
<div class="t" style="left:705.61px;top:561.86px;font-size:6.5px;font-weight:400;color:#5a6066;transform:scaleX(0.9300);">0</div>
<div class="t sb" style="left:121.61px;top:579.59px;font-size:6.5px;font-weight:400;color:#4a5157;transform:scaleX(0.9700);">23</div>
<div class="t" style="left:186.61px;top:579.59px;font-size:6.5px;font-weight:400;color:#5a6066;transform:scaleX(0.9300);">23</div>
<div class="t" style="left:251.71px;top:579.59px;font-size:6.5px;font-weight:400;color:#5a6066;transform:scaleX(0.9300);">64QAM</div>
<div class="t" style="left:317.21px;top:579.59px;font-size:6.5px;font-weight:400;color:#5a6066;transform:scaleX(0.9300);">762</div>
<div class="t" style="left:382.41px;top:579.59px;font-size:6.5px;font-weight:400;color:#5a6066;transform:scaleX(0.9300);">0.8</div>
<div class="t" style="left:454.41px;top:579.59px;font-size:6.5px;font-weight:400;color:#5a6066;transform:scaleX(0.9300);">-36.3</div>
<div class="t" style="left:526.71px;top:579.59px;font-size:6.5px;font-weight:400;color:#5a6066;transform:scaleX(0.9300);">0.32</div>
<div class="t" style="left:599.21px;top:579.59px;font-size:6.5px;font-weight:400;color:#5a6066;transform:scaleX(0.9300);">94</div>
<div class="t" style="left:705.61px;top:579.59px;font-size:6.5px;font-weight:400;color:#5a6066;transform:scaleX(0.9300);">0</div>
<div class="t sb" style="left:121.61px;top:597.33px;font-size:6.5px;font-weight:400;color:#4a5157;transform:scaleX(0.9700);">24</div>
<div class="t" style="left:186.61px;top:597.33px;font-size:6.5px;font-weight:400;color:#5a6066;transform:scaleX(0.9300);">24</div>
<div class="t" style="left:251.71px;top:597.33px;font-size:6.5px;font-weight:400;color:#5a6066;transform:scaleX(0.9300);">64QAM</div>
<div class="t" style="left:317.21px;top:597.33px;font-size:6.5px;font-weight:400;color:#5a6066;transform:scaleX(0.9300);">770</div>
<div class="t" style="left:382.41px;top:597.33px;font-size:6.5px;font-weight:400;color:#5a6066;transform:scaleX(0.9300);">1.2</div>
<div class="t" style="left:454.41px;top:597.33px;font-size:6.5px;font-weight:400;color:#5a6066;transform:scaleX(0.9300);">-36.6</div>
<div class="t" style="left:526.71px;top:597.33px;font-size:6.5px;font-weight:400;color:#5a6066;transform:scaleX(0.9300);">0.32</div>
<div class="t" style="left:599.21px;top:597.33px;font-size:6.5px;font-weight:400;color:#5a6066;transform:scaleX(0.9300);">78</div>
<div class="t" style="left:705.61px;top:597.33px;font-size:6.5px;font-weight:400;color:#5a6066;transform:scaleX(0.9300);">0</div>
<div class="t sb" style="left:121.61px;top:615.07px;font-size:6.5px;font-weight:400;color:#4a5157;transform:scaleX(0.9700);">25</div>
<div class="t" style="left:186.61px;top:615.07px;font-size:6.5px;font-weight:400;color:#5a6066;transform:scaleX(0.9300);">25</div>
<div class="t" style="left:251.71px;top:615.07px;font-size:6.5px;font-weight:400;color:#5a6066;transform:scaleX(0.9300);">64QAM</div>
<div class="t" style="left:317.21px;top:615.07px;font-size:6.5px;font-weight:400;color:#5a6066;transform:scaleX(0.9300);">778</div>
<div class="t" style="left:382.41px;top:615.07px;font-size:6.5px;font-weight:400;color:#5a6066;transform:scaleX(0.9300);">0.6</div>
<div class="t" style="left:454.41px;top:615.07px;font-size:6.5px;font-weight:400;color:#5a6066;transform:scaleX(0.9300);">-36.6</div>
<div class="t" style="left:526.71px;top:615.07px;font-size:6.5px;font-weight:400;color:#5a6066;transform:scaleX(0.9300);">0.32</div>
<div class="t" style="left:599.21px;top:615.07px;font-size:6.5px;font-weight:400;color:#5a6066;transform:scaleX(0.9300);">194</div>
<div class="t" style="left:705.61px;top:615.07px;font-size:6.5px;font-weight:400;color:#5a6066;transform:scaleX(0.9300);">0</div>
<div class="t sb" style="left:121.61px;top:632.81px;font-size:6.5px;font-weight:400;color:#4a5157;transform:scaleX(0.9700);">26</div>
<div class="t" style="left:186.61px;top:632.81px;font-size:6.5px;font-weight:400;color:#5a6066;transform:scaleX(0.9300);">26</div>
<div class="t" style="left:251.71px;top:632.81px;font-size:6.5px;font-weight:400;color:#5a6066;transform:scaleX(0.9300);">64QAM</div>
<div class="t" style="left:317.21px;top:632.81px;font-size:6.5px;font-weight:400;color:#5a6066;transform:scaleX(0.9300);">786</div>
<div class="t" style="left:382.41px;top:632.81px;font-size:6.5px;font-weight:400;color:#5a6066;transform:scaleX(0.9300);">1.0</div>
<div class="t" style="left:454.41px;top:632.81px;font-size:6.5px;font-weight:400;color:#5a6066;transform:scaleX(0.9300);">-36.6</div>
<div class="t" style="left:526.71px;top:632.81px;font-size:6.5px;font-weight:400;color:#5a6066;transform:scaleX(0.9300);">0.32</div>
<div class="t" style="left:599.21px;top:632.81px;font-size:6.5px;font-weight:400;color:#5a6066;transform:scaleX(0.9300);">73</div>
<div class="t" style="left:705.61px;top:632.81px;font-size:6.5px;font-weight:400;color:#5a6066;transform:scaleX(0.9300);">0</div>
<div class="t sb" style="left:121.61px;top:650.54px;font-size:6.5px;font-weight:400;color:#4a5157;transform:scaleX(0.9700);">27</div>
<div class="t" style="left:186.61px;top:650.54px;font-size:6.5px;font-weight:400;color:#5a6066;transform:scaleX(0.9300);">27</div>
<div class="t" style="left:251.71px;top:650.54px;font-size:6.5px;font-weight:400;color:#5a6066;transform:scaleX(0.9300);">64QAM</div>
<div class="t" style="left:317.21px;top:650.54px;font-size:6.5px;font-weight:400;color:#5a6066;transform:scaleX(0.9300);">794</div>
<div class="t" style="left:382.41px;top:650.54px;font-size:6.5px;font-weight:400;color:#5a6066;transform:scaleX(0.9300);">1.4</div>
<div class="t" style="left:454.41px;top:650.54px;font-size:6.5px;font-weight:400;color:#5a6066;transform:scaleX(0.9300);">-37.6</div>
<div class="t" style="left:526.71px;top:650.54px;font-size:6.5px;font-weight:400;color:#5a6066;transform:scaleX(0.9300);">0.32</div>
<div class="t" style="left:599.21px;top:650.54px;font-size:6.5px;font-weight:400;color:#5a6066;transform:scaleX(0.9300);">51</div>
<div class="t" style="left:705.61px;top:650.54px;font-size:6.5px;font-weight:400;color:#5a6066;transform:scaleX(0.9300);">0</div>
<div class="t sb" style="left:121.61px;top:668.28px;font-size:6.5px;font-weight:400;color:#4a5157;transform:scaleX(0.9700);">28</div>
<div class="t" style="left:186.61px;top:668.28px;font-size:6.5px;font-weight:400;color:#5a6066;transform:scaleX(0.9300);">28</div>
<div class="t" style="left:251.71px;top:668.28px;font-size:6.5px;font-weight:400;color:#5a6066;transform:scaleX(0.9300);">64QAM</div>
<div class="t" style="left:317.21px;top:668.28px;font-size:6.5px;font-weight:400;color:#5a6066;transform:scaleX(0.9300);">802</div>
<div class="t" style="left:382.41px;top:668.28px;font-size:6.5px;font-weight:400;color:#5a6066;transform:scaleX(0.9300);">1.7</div>
<div class="t" style="left:454.41px;top:668.28px;font-size:6.5px;font-weight:400;color:#5a6066;transform:scaleX(0.9300);">-36.6</div>
<div class="t" style="left:526.71px;top:668.28px;font-size:6.5px;font-weight:400;color:#5a6066;transform:scaleX(0.9300);">0.32</div>
<div class="t" style="left:599.21px;top:668.28px;font-size:6.5px;font-weight:400;color:#5a6066;transform:scaleX(0.9300);">37</div>
<div class="t" style="left:705.61px;top:668.28px;font-size:6.5px;font-weight:400;color:#5a6066;transform:scaleX(0.9300);">0</div>
<div class="t sb" style="left:121.61px;top:686.02px;font-size:6.5px;font-weight:400;color:#4a5157;transform:scaleX(0.9700);">29</div>
<div class="t" style="left:186.61px;top:686.02px;font-size:6.5px;font-weight:400;color:#5a6066;transform:scaleX(0.9300);">29</div>
<div class="t" style="left:251.71px;top:686.02px;font-size:6.5px;font-weight:400;color:#5a6066;transform:scaleX(0.9300);">64QAM</div>
<div class="t" style="left:317.21px;top:686.02px;font-size:6.5px;font-weight:400;color:#5a6066;transform:scaleX(0.9300);">810</div>
<div class="t" style="left:382.41px;top:686.02px;font-size:6.5px;font-weight:400;color:#5a6066;transform:scaleX(0.9300);">2.2</div>
<div class="t" style="left:454.41px;top:686.02px;font-size:6.5px;font-weight:400;color:#5a6066;transform:scaleX(0.9300);">-37.3</div>
<div class="t" style="left:526.71px;top:686.02px;font-size:6.5px;font-weight:400;color:#5a6066;transform:scaleX(0.9300);">0.32</div>
<div class="t" style="left:599.21px;top:686.02px;font-size:6.5px;font-weight:400;color:#5a6066;transform:scaleX(0.9300);">39</div>
<div class="t" style="left:705.61px;top:686.02px;font-size:6.5px;font-weight:400;color:#5a6066;transform:scaleX(0.9300);">0</div>
<div class="t sb" style="left:121.61px;top:703.76px;font-size:6.5px;font-weight:400;color:#4a5157;transform:scaleX(0.9700);">30</div>
<div class="t" style="left:186.61px;top:703.76px;font-size:6.5px;font-weight:400;color:#5a6066;transform:scaleX(0.9300);">30</div>
<div class="t" style="left:251.71px;top:703.76px;font-size:6.5px;font-weight:400;color:#5a6066;transform:scaleX(0.9300);">64QAM</div>
<div class="t" style="left:317.21px;top:703.76px;font-size:6.5px;font-weight:400;color:#5a6066;transform:scaleX(0.9300);">818</div>
<div class="t" style="left:382.41px;top:703.76px;font-size:6.5px;font-weight:400;color:#5a6066;transform:scaleX(0.9300);">2.2</div>
<div class="t" style="left:454.41px;top:703.76px;font-size:6.5px;font-weight:400;color:#5a6066;transform:scaleX(0.9300);">-37.3</div>
<div class="t" style="left:526.71px;top:703.76px;font-size:6.5px;font-weight:400;color:#5a6066;transform:scaleX(0.9300);">0.32</div>
<div class="t" style="left:599.21px;top:703.76px;font-size:6.5px;font-weight:400;color:#5a6066;transform:scaleX(0.9300);">32</div>
<div class="t" style="left:705.61px;top:703.76px;font-size:6.5px;font-weight:400;color:#5a6066;transform:scaleX(0.9300);">0</div>
<div class="t sb" style="left:121.61px;top:721.49px;font-size:6.5px;font-weight:400;color:#4a5157;transform:scaleX(0.9700);">31</div>
<div class="t" style="left:186.61px;top:721.49px;font-size:6.5px;font-weight:400;color:#5a6066;transform:scaleX(0.9300);">31</div>
<div class="t" style="left:251.71px;top:721.49px;font-size:6.5px;font-weight:400;color:#5a6066;transform:scaleX(0.9300);">64QAM</div>
<div class="t" style="left:317.21px;top:721.49px;font-size:6.5px;font-weight:400;color:#5a6066;transform:scaleX(0.9300);">826</div>
<div class="t" style="left:382.41px;top:721.49px;font-size:6.5px;font-weight:400;color:#5a6066;transform:scaleX(0.9300);">1.6</div>
<div class="t" style="left:454.41px;top:721.49px;font-size:6.5px;font-weight:400;color:#5a6066;transform:scaleX(0.9300);">-37.6</div>
<div class="t" style="left:526.71px;top:721.49px;font-size:6.5px;font-weight:400;color:#5a6066;transform:scaleX(0.9300);">0.32</div>
<div class="t" style="left:599.21px;top:721.49px;font-size:6.5px;font-weight:400;color:#5a6066;transform:scaleX(0.9300);">38</div>
<div class="t" style="left:705.61px;top:721.49px;font-size:6.5px;font-weight:400;color:#5a6066;transform:scaleX(0.9300);">0</div>
<div class="t sb" style="left:121.61px;top:739.23px;font-size:6.5px;font-weight:400;color:#4a5157;transform:scaleX(0.9700);">32</div>
<div class="t" style="left:186.61px;top:739.23px;font-size:6.5px;font-weight:400;color:#5a6066;transform:scaleX(0.9300);">32</div>
<div class="t" style="left:251.71px;top:739.23px;font-size:6.5px;font-weight:400;color:#5a6066;transform:scaleX(0.9300);">64QAM</div>
<div class="t" style="left:317.21px;top:739.23px;font-size:6.5px;font-weight:400;color:#5a6066;transform:scaleX(0.9300);">834</div>
<div class="t" style="left:382.41px;top:739.23px;font-size:6.5px;font-weight:400;color:#5a6066;transform:scaleX(0.9300);">0.9</div>
<div class="t" style="left:454.41px;top:739.23px;font-size:6.5px;font-weight:400;color:#5a6066;transform:scaleX(0.9300);">-36.3</div>
<div class="t" style="left:526.71px;top:739.23px;font-size:6.5px;font-weight:400;color:#5a6066;transform:scaleX(0.9300);">0.32</div>
<div class="t" style="left:599.21px;top:739.23px;font-size:6.5px;font-weight:400;color:#5a6066;transform:scaleX(0.9300);">130</div>
<div class="t" style="left:705.61px;top:739.23px;font-size:6.5px;font-weight:400;color:#5a6066;transform:scaleX(0.9300);">0</div>
<div class="t" style="left:122.19px;top:791.80px;font-size:6.9px;font-weight:400;color:#5b6167;transform:scaleX(0.8465);">DOCSIS 3.1</div>
<div class="t" style="left:121.40px;top:813.95px;font-size:6.6px;font-weight:400;color:#5d6670;transform:scaleX(1.0197);">Kanal</div>
<div class="t" style="left:217.90px;top:813.95px;font-size:6.6px;font-weight:400;color:#5d6670;transform:scaleX(0.9400);">Kanal ID</div>
<div class="t" style="left:314.90px;top:813.95px;font-size:6.6px;font-weight:400;color:#5d6670;transform:scaleX(0.9400);">Typ</div>
<div class="t" style="left:439.40px;top:813.95px;font-size:6.6px;font-weight:400;color:#5d6670;transform:scaleX(0.9456);">Frequenz (MHz)</div>
<div class="t" style="left:563.60px;top:813.95px;font-size:6.6px;font-weight:400;color:#5d6670;transform:scaleX(0.9585);">Power Level (dBmV)</div>
<div class="t sb" style="left:121.41px;top:832.60px;font-size:6.5px;font-weight:400;color:#4a5157;transform:scaleX(0.9700);">1</div>
<div class="t" style="left:217.91px;top:832.60px;font-size:6.5px;font-weight:400;color:#5a6066;transform:scaleX(0.9300);">0</div>
<div class="t" style="left:314.91px;top:832.60px;font-size:6.5px;font-weight:400;color:#5a6066;transform:scaleX(0.9300);">4K</div>
<div class="t" style="left:439.41px;top:832.60px;font-size:6.5px;font-weight:400;color:#5a6066;transform:scaleX(0.9300);">30 - 65</div>
<div class="t" style="left:563.61px;top:832.60px;font-size:6.5px;font-weight:400;color:#5a6066;transform:scaleX(0.9300);">41.0</div>
<div class="t" style="left:688.11px;top:832.60px;font-size:6.5px;font-weight:400;color:#5a6066;transform:scaleX(0.9300);">OFDMA</div>
<div class="t" style="left:122.19px;top:853.50px;font-size:6.9px;font-weight:400;color:#5b6167;transform:scaleX(0.8465);">DOCSIS 3.0</div>
<div class="t" style="left:121.40px;top:875.25px;font-size:6.6px;font-weight:400;color:#5d6670;transform:scaleX(1.0197);">Kanal</div>
<div class="t" style="left:217.90px;top:875.25px;font-size:6.6px;font-weight:400;color:#5d6670;transform:scaleX(0.9400);">Kanal ID</div>
<div class="t" style="left:314.90px;top:875.25px;font-size:6.6px;font-weight:400;color:#5d6670;transform:scaleX(0.9400);">Typ</div>
<div class="t" style="left:439.40px;top:875.25px;font-size:6.6px;font-weight:400;color:#5d6670;transform:scaleX(0.9456);">Frequenz (MHz)</div>
<div class="t" style="left:563.60px;top:875.25px;font-size:6.6px;font-weight:400;color:#5d6670;transform:scaleX(0.9585);">Power Level (dBmV)</div>
<div class="t" style="left:688.10px;top:875.25px;font-size:6.6px;font-weight:400;color:#5d6670;">Multiplex-Verfahren</div>
<div class="t sb" style="left:121.41px;top:893.70px;font-size:6.5px;font-weight:400;color:#4a5157;transform:scaleX(0.9700);">1</div>
<div class="t" style="left:217.91px;top:893.70px;font-size:6.5px;font-weight:400;color:#5a6066;transform:scaleX(0.9300);">1</div>
<div class="t" style="left:314.91px;top:893.70px;font-size:6.5px;font-weight:400;color:#5a6066;transform:scaleX(0.9300);">32QAM</div>
<div class="t" style="left:439.41px;top:893.70px;font-size:6.5px;font-weight:400;color:#5a6066;transform:scaleX(0.9300);">51</div>
<div class="t" style="left:563.61px;top:893.70px;font-size:6.5px;font-weight:400;color:#5a6066;transform:scaleX(0.9300);">45.0</div>
<div class="t" style="left:688.11px;top:893.70px;font-size:6.5px;font-weight:400;color:#5a6066;transform:scaleX(0.9300);">ATDMA</div>
<div class="t sb" style="left:121.41px;top:911.50px;font-size:6.5px;font-weight:400;color:#4a5157;transform:scaleX(0.9700);">2</div>
<div class="t" style="left:217.91px;top:911.50px;font-size:6.5px;font-weight:400;color:#5a6066;transform:scaleX(0.9300);">4</div>
<div class="t" style="left:314.91px;top:911.50px;font-size:6.5px;font-weight:400;color:#5a6066;transform:scaleX(0.9300);">32QAM</div>
<div class="t" style="left:439.41px;top:911.50px;font-size:6.5px;font-weight:400;color:#5a6066;transform:scaleX(0.9300);">31</div>
<div class="t" style="left:563.61px;top:911.50px;font-size:6.5px;font-weight:400;color:#5a6066;transform:scaleX(0.9300);">45.0</div>
<div class="t" style="left:688.11px;top:911.50px;font-size:6.5px;font-weight:400;color:#5a6066;transform:scaleX(0.9300);">ATDMA</div>
<div class="t sb" style="left:121.41px;top:929.30px;font-size:6.5px;font-weight:400;color:#4a5157;transform:scaleX(0.9700);">3</div>
<div class="t" style="left:217.91px;top:929.30px;font-size:6.5px;font-weight:400;color:#5a6066;transform:scaleX(0.9300);">3</div>
<div class="t" style="left:314.91px;top:929.30px;font-size:6.5px;font-weight:400;color:#5a6066;transform:scaleX(0.9300);">64QAM</div>
<div class="t" style="left:439.41px;top:929.30px;font-size:6.5px;font-weight:400;color:#5a6066;transform:scaleX(0.9300);">37</div>
<div class="t" style="left:563.61px;top:929.30px;font-size:6.5px;font-weight:400;color:#5a6066;transform:scaleX(0.9300);">47.0</div>
<div class="t" style="left:688.11px;top:929.30px;font-size:6.5px;font-weight:400;color:#5a6066;transform:scaleX(0.9300);">ATDMA</div>
<div class="t sb" style="left:121.41px;top:947.10px;font-size:6.5px;font-weight:400;color:#4a5157;transform:scaleX(0.9700);">4</div>
<div class="t" style="left:217.91px;top:947.10px;font-size:6.5px;font-weight:400;color:#5a6066;transform:scaleX(0.9300);">2</div>
<div class="t" style="left:314.91px;top:947.10px;font-size:6.5px;font-weight:400;color:#5a6066;transform:scaleX(0.9300);">64QAM</div>
<div class="t" style="left:439.41px;top:947.10px;font-size:6.5px;font-weight:400;color:#5a6066;transform:scaleX(0.9300);">45</div>
<div class="t" style="left:563.61px;top:947.10px;font-size:6.5px;font-weight:400;color:#5a6066;transform:scaleX(0.9300);">47.0</div>
<div class="t" style="left:688.11px;top:947.10px;font-size:6.5px;font-weight:400;color:#5a6066;transform:scaleX(0.9300);">ATDMA</div>
<div class="t" style="left:764.03px;top:970.50px;font-size:6.6px;font-weight:400;color:#fff;">Aktualisieren</div>
</div></body></html>
